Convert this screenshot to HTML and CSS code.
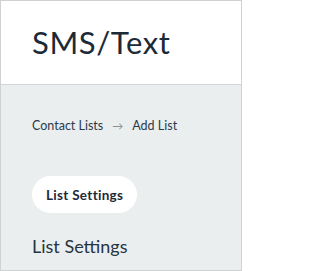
FILE: index.html
```html
<!DOCTYPE html>
<html>
<head>
<meta charset="utf-8">
<link rel="stylesheet" href="styles.css">
</head>
<body>
<div class="frame">
  <header class="header">
    <h1 class="title">SMS/Text</h1>
  </header>
  <main class="content">
    <nav class="crumbs">
      <span class="crumb">Contact Lists</span>
      <span class="arrow">&#8594;</span>
      <span class="crumb">Add List</span>
    </nav>
    <div class="tabs">
      <span class="pill">List Settings</span>
    </div>
    <h2 class="section">List Settings</h2>
  </main>
</div>
</body>
</html>
```
FILE: styles.css
```css
html, body {
  margin: 0;
  padding: 0;
}
body {
  font-family: Lato, "Open Sans", sans-serif;
  color: #1e2b38;
}
.frame {
  width: 242px;
  height: 271px;
  box-sizing: border-box;
  border: 1px solid #cfd1d2;
  display: flex;
  flex-direction: column;
  overflow: hidden;
}
.header {
  background: #fff;
  height: 84px;
  box-sizing: border-box;
  border-bottom: 1px solid #d3d6d8;
  padding: 22px 0 0 31px;
}
.title {
  margin: 0;
  font-size: 31px;
  font-weight: 400;
  line-height: 38px;
  letter-spacing: 0.6px;
  color: #1c2a37;
}
.content {
  flex: 1;
  background: #ebeeef;
  padding: 33px 0 0 31px;
}
.crumbs {
  display: flex;
  align-items: center;
  gap: 9px;
  font-size: 12.5px;
  line-height: 16px;
  color: #2a3a4a;
}
.arrow {
  color: #8a9299;
  font-size: 11px;
}
.tabs {
  margin-top: 42px;
  display: flex;
}
.pill {
  background: #fff;
  border-radius: 19px;
  height: 37px;
  padding: 0 14px;
  display: flex;
  align-items: center;
  font-size: 13.5px;
  font-weight: 700;
  letter-spacing: 0.3px;
  color: #1c2a37;
}
.section {
  margin: 22px 0 0;
  font-size: 18px;
  font-weight: 400;
  line-height: 22px;
  color: #26343f;
}
```
